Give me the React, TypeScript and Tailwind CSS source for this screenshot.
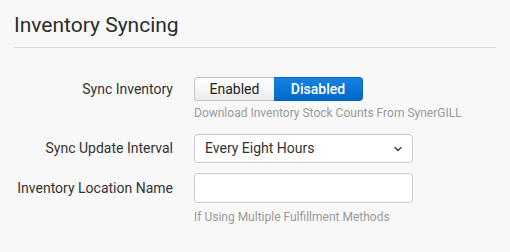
import { ChevronDown } from "lucide-react";

export default function App() {
  return (
    <div className="h-[252px] w-[510px] bg-[#f8f8f8] font-['Roboto',sans-serif] text-[#333]">
      <div className="px-[14px] pt-[14px]">
        <h1 className="border-b border-[#dddddd] pb-[10px] text-[21px] leading-[23px] font-normal text-[#2b2b2b]">
          Inventory Syncing
        </h1>
      </div>

      <div className="mt-[29px] grid grid-cols-[173px_219px] gap-x-[21px] text-[14px]">
        <div className="flex h-[24px] items-center justify-end">Sync Inventory</div>
        <div>
          <div className="flex h-[24px] w-[169px]">
            <button className="w-[80px] rounded-l-[4px] border border-r-0 border-[#c4c4c4] bg-gradient-to-b from-white to-[#ececec] text-[14px] font-normal text-[#222]">
              Enabled
            </button>
            <button className="w-[89px] rounded-r-[4px] border border-l-0 border-[#0a62b8] bg-gradient-to-b from-[#1683e0] to-[#0068cc] text-[14px] font-medium text-white">
              Disabled
            </button>
          </div>
          <p className="mt-[5px] whitespace-nowrap text-[12px] leading-[14px] text-[#9a9a9a]">
            Download Inventory Stock Counts From SynerGILL
          </p>
        </div>

        <div className="mt-[14px] flex h-[29px] items-center justify-end">Sync Update Interval</div>
        <div className="mt-[14px] flex h-[29px] items-center justify-between rounded-[4px] border border-[#cccccc] bg-white pr-[8px] pl-[10px] text-[14px] text-[#333]">
          <span>Every Eight Hours</span>
          <ChevronDown size={12} strokeWidth={3} className="text-[#444]" />
        </div>

        <div className="mt-[10px] flex h-[30px] items-center justify-end">Inventory Location Name</div>
        <div className="mt-[10px]">
          <div className="h-[30px] rounded-[4px] border border-[#cccccc] bg-white" />
          <p className="mt-[7px] whitespace-nowrap text-[12px] leading-[14px] text-[#9a9a9a]">
            If Using Multiple Fulfillment Methods
          </p>
        </div>
      </div>
    </div>
  );
}
